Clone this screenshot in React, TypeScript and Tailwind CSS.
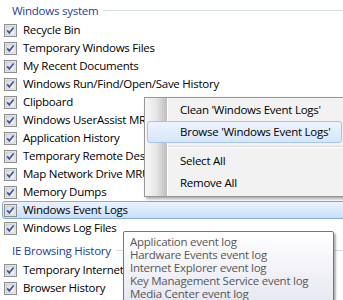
import React from 'react';

const windowsItems = [
  'Recycle Bin',
  'Temporary Windows Files',
  'My Recent Documents',
  'Windows Run/Find/Open/Save History',
  'Clipboard',
  'Windows UserAssist MRU',
  'Application History',
  'Temporary Remote Desktop Files',
  'Map Network Drive MRU',
  'Memory Dumps',
  'Windows Event Logs',
  'Windows Log Files',
];

const ieItems = ['Temporary Internet Files', 'Browser History', 'Cookies'];

const tipLines = [
  'Application event log',
  'Hardware Events event log',
  'Internet Explorer event log',
  'Key Management Service event log',
  'Media Center event log',
];

function CheckBox() {
  return (
    <svg width="13" height="13" viewBox="0 0 13 13" className="shrink-0">
      <defs>
        <linearGradient id="cbfill" x1="0" y1="0" x2="1" y2="1">
          <stop offset="0" stopColor="#d8d8d8" />
          <stop offset="1" stopColor="#fbfbfb" />
        </linearGradient>
      </defs>
      <rect x="0.5" y="0.5" width="12" height="12" fill="#f4f4f4" stroke="#8e8f8f" />
      <rect x="2" y="2" width="9" height="9" fill="url(#cbfill)" stroke="#b4b4b4" strokeWidth="0.6" />
      <path d="M3.2 6.4 L5.3 8.9 L9.6 3.4" fill="none" stroke="#3a55a4" strokeWidth="1.7" />
    </svg>
  );
}

function GroupHeader({ title, className }: { title: string; className?: string }) {
  return (
    <div className={`h-[21px] flex items-center pl-3 gap-[5px] ${className || ''}`}>
      <span className="text-[#1e3c9e] whitespace-nowrap">{title}</span>
      <div className="flex-1 h-px bg-[#d5dfe5]" />
    </div>
  );
}

function Row({ label, selected }: { label: string; selected?: boolean }) {
  return (
    <div
      className={`h-[18px] ml-[2px] -mr-2 flex items-center gap-[6px] pl-[1px] rounded-[3px] border whitespace-nowrap ${
        selected
          ? 'border-[#84acdd] bg-gradient-to-b from-[#eaf3fd] to-[#c9dff9]'
          : 'border-transparent'
      }`}
    >
      <CheckBox />
      <span className="text-black">{label}</span>
    </div>
  );
}

export default function App() {
  return (
    <div
      className="relative w-[343px] h-[300px] overflow-hidden bg-white text-[11.5px] leading-[16px] tracking-[-0.25px]"
      style={{ fontFamily: '"Open Sans", "Noto Sans", sans-serif' }}
    >
      <div className="flex flex-col">
        <GroupHeader title="Windows system" />
        {windowsItems.map((w) => (
          <Row key={w} label={w} selected={w === 'Windows Event Logs'} />
        ))}
        <GroupHeader title="IE Browsing History" className="mt-[3px]" />
        {ieItems.map((w) => (
          <Row key={w} label={w} />
        ))}
      </div>

      {/* context menu */}
      <div className="absolute left-[144px] top-[97px] w-[202px] h-[100px] bg-[#f2f2f2] border border-[#979797] shadow-[2px_2px_3px_rgba(0,0,0,0.35)] flex whitespace-nowrap">
        <div className="w-[22px] shrink-0 bg-gradient-to-r from-[#f7f7f7] via-[#e6e6e6] to-[#bdbdbd]" />
        <div className="w-px bg-white shrink-0" />
        <div className="flex-1 flex flex-col pt-[1px]">
          <div className="h-[22px] flex items-center pl-[12px] text-black">Clean 'Windows Event Logs'</div>
          <div className="h-[22px] -ml-[21px] mr-[3px] flex items-center pl-[32px] text-black rounded-[3px] border border-[#a6c5ec] bg-gradient-to-b from-[#edf4fd] to-[#d6e6fa]">
            Browse 'Windows Event Logs'
          </div>
          <div className="h-[7px] flex flex-col justify-center pr-[2px]">
            <div className="h-px bg-[#dadada]" />
            <div className="h-px bg-white" />
          </div>
          <div className="h-[22px] flex items-center pl-[12px] text-black">Select All</div>
          <div className="h-[22px] flex items-center pl-[12px] text-black">Remove All</div>
        </div>
      </div>

      {/* tooltip */}
      <div className="absolute left-[123px] top-[231px] w-[211px] h-[80px] rounded-[2px] border border-[#767676] bg-gradient-to-b from-white to-[#e4e5f0] shadow-[2px_2px_2px_rgba(0,0,0,0.3)] pl-[6px] pt-[3px] text-[#575757] leading-[13px]">
        {tipLines.map((t) => (
          <div key={t} className="whitespace-nowrap">{t}</div>
        ))}
      </div>
    </div>
  );
}
